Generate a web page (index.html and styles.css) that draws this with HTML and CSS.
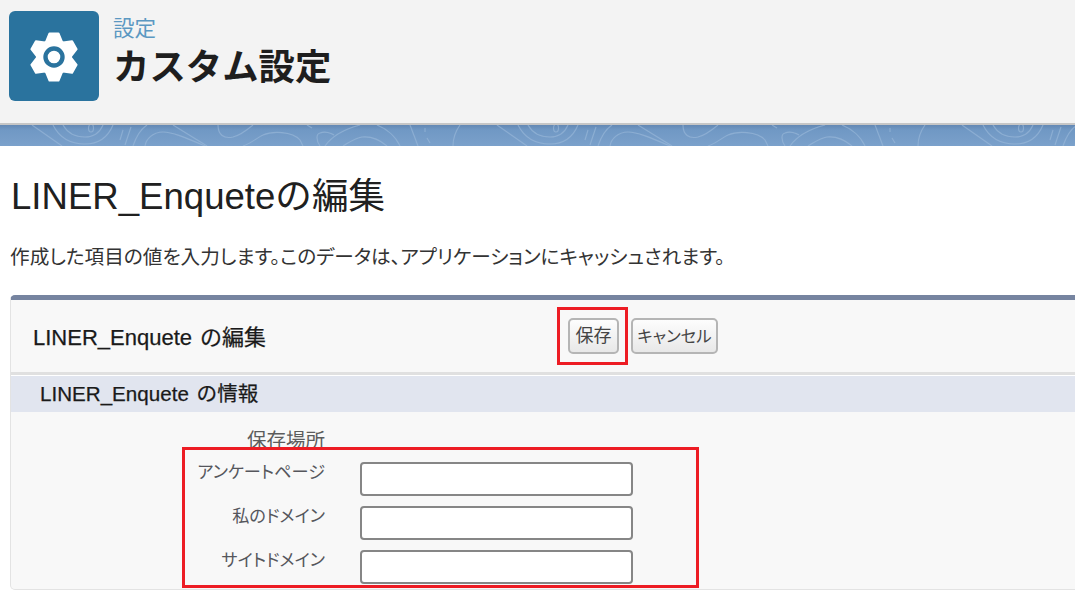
FILE: index.html
```html
<!DOCTYPE html>
<html lang="ja">
<head>
<meta charset="utf-8">
<title>カスタム設定</title>
<link rel="stylesheet" href="styles.css">
</head>
<body>
<header class="page-head">
  <div class="app-icon">
    <svg class="gear" viewBox="-30 -30 60 60" width="60" height="60" aria-hidden="true">
      <defs>
        <path id="tooth" d="M-8 -15L-4.5 -23.5H4.5L8 -15Z"/>
      </defs>
      <g fill="#fff" stroke="#fff" stroke-width="2" stroke-linejoin="round">
        <circle r="17"/>
        <use href="#tooth"/>
        <use href="#tooth" transform="rotate(60)"/>
        <use href="#tooth" transform="rotate(120)"/>
        <use href="#tooth" transform="rotate(180)"/>
        <use href="#tooth" transform="rotate(240)"/>
        <use href="#tooth" transform="rotate(300)"/>
      </g>
      <circle r="8.5" fill="#fff" stroke="#2a739e" stroke-width="4.4"/>
    </svg>
  </div>
  <div class="head-text">
    <div class="crumb">設定</div>
    <h1 class="head-title">カスタム設定</h1>
  </div>
</header>
<div class="band">
  <svg class="swirl" width="1075" height="21" aria-hidden="true">
    <defs>
      <pattern id="topo" width="465" height="21" patternUnits="userSpaceOnUse">
        <g fill="none" stroke="#9dbbdb" stroke-width="1.1" opacity=".6">
          <path d="M32 0L62 21"/>
          <path d="M53 0C60 14 72 19 85 19C98 19 108 12 113 0"/>
          <path d="M63 0C68 9 76 12 85 12C94 12 100 7 103 0"/>
          <ellipse cx="91" cy="3" rx="2.5" ry="4"/>
          <path d="M123 5L120 15M131 2L125 20"/>
          <path d="M133 21C136 12 141 4 147 0"/>
          <path d="M145 21C146 14 153 7 163 7C172 7 184 12 205 21"/>
          <path d="M173 0L207 21"/>
          <path d="M218 0C218 10 224 14 233 12C241 10 247 5 253 0"/>
          <path d="M243 21C252 18 258 12 263 10C272 6 292 6 300 15L303 21"/>
          <path d="M307 0L312 3"/>
          <path d="M320 21C316 15 316 9 320 8C325 6 331 8 334 10"/>
          <path d="M325 21C332 11 345 4 360 0M377 0C387 4 396 12 400 21"/>
          <path d="M343 21C350 17 355 13 362 12C372 11 380 15 387 21"/>
          <path d="M410 0L418 21"/>
          <path d="M425 3V7M427 13L430 18"/>
          <path d="M453 21C453 14 455 7 460 0"/>
        </g>
      </pattern>
    </defs>
    <rect width="1075" height="21" fill="url(#topo)"/>
  </svg>
</div>
<main class="content">
  <h2 class="page-title">LINER_Enqueteの編集</h2>
  <p class="page-desc">作成した項目の値を入力します。このデータは、アプリケーションにキャッシュされます。</p>
  <section class="panel">
    <div class="panel-head">
      <h3 class="panel-title">LINER_Enquete の編集</h3>
      <div class="actions">
        <button class="btn btn-save" type="button">保存<span class="mark mark-save"></span></button>
        <button class="btn btn-cancel" type="button">キャンセル</button>
      </div>
    </div>
    <h4 class="section-title">LINER_Enquete の情報</h4>
    <div class="form">
      <div class="store-label">保存場所</div>
      <div class="fields">
        <span class="mark mark-fields"></span>
        <label class="field"><span class="field-label">アンケートページ</span><input class="field-input" type="text"></label>
        <label class="field"><span class="field-label">私のドメイン</span><input class="field-input" type="text"></label>
        <label class="field"><span class="field-label">サイトドメイン</span><input class="field-input" type="text"></label>
      </div>
    </div>
  </section>
</main>
</body>
</html>
```

FILE: styles.css
```css
* { box-sizing: border-box; }
html, body { margin: 0; padding: 0; }
body {
  width: 1075px;
  height: 595px;
  overflow: hidden;
  background: #fff;
  color: #1c1c1c;
  font-family: "Liberation Sans", "Noto Sans CJK JP", sans-serif;
}
.page-head {
  height: 125px;
  background: #f3f3f3;
  border-bottom: 2px solid #c6c6c6;
  padding: 11px 0 0 9px;
  display: flex;
  gap: 15px;
}
.app-icon {
  width: 90px;
  height: 90px;
  border-radius: 6px;
  background: #2a739e;
  display: flex;
  align-items: center;
  justify-content: center;
}
.gear { display: block; margin-left: -1px; margin-top: 2px; }
.head-text { display: flex; flex-direction: column; margin-left: -1px; }
.crumb {
  font-size: 21.5px;
  line-height: 24px;
  margin-top: 6px;
  color: #5b98c2;
}
.head-title {
  margin: 5px 0 0;
  font-size: 36.4px;
  line-height: 44px;
  font-weight: 700;
  color: #1e1e1e;
}
.band {
  height: 21px;
  background: linear-gradient(#6388b4, #7098c4 5px, #7ba1cb);
  overflow: hidden;
}
.swirl { display: block; }
.content { padding: 26px 0 0 10px; }
.page-title {
  margin: 0;
  font-size: 36.6px;
  line-height: 50px;
  font-weight: 400;
  padding-left: 1px;
  color: #202020;
}
.page-desc {
  margin: 22px 0 0;
  font-size: 19.65px;
  line-height: 26px;
  font-feature-settings: "palt" 1;
  color: #333;
}
.panel {
  margin: 25px -12px 0 0;
  height: 295px;
  background: #f8f8f8;
  border: 1px solid #e3e3e3;
  border-top: 5px solid #7684a0;
  border-radius: 5px;
}
.panel-head {
  height: 75px;
  display: grid;
  grid-template-columns: 546px auto;
  align-items: center;
  border-bottom: 3px solid #e0e0e0;
  box-shadow: 0 1px 0 #fff;
}
.panel-title {
  margin: 0;
  padding: 0 0 2px 22px;
  font-size: 22px;
  font-weight: 400;
  word-spacing: 2px;
  -webkit-text-stroke: .25px #1a1a1a;
  color: #1a1a1a;
}
.actions {
  display: flex;
  gap: 12px;
  margin-left: 11px;
}
.btn {
  position: relative;
  height: 36px;
  padding: 0;
  border: 2px solid #b5b5b5;
  border-radius: 5px;
  background: linear-gradient(#fdfdfd, #e8e8e8);
  font: 18px/1 "Liberation Sans", "Noto Sans CJK JP", sans-serif;
  font-feature-settings: "palt" 1;
  color: #444;
}
.btn-save { width: 51px; }
.btn-cancel { width: 87px; font-size: 16.4px; }
.mark {
  position: absolute;
  border: 3px solid #ed1c24;
  pointer-events: none;
}
.mark-save {
  left: -13px;
  top: -13px;
  width: 71px;
  height: 58px;
}
.section-title {
  margin: 1px 0 0;
  height: 36px;
  padding-left: 29px;
  background: #e1e5ef;
  font-size: 20.6px;
  line-height: 36px;
  font-weight: 400;
  word-spacing: 2px;
  -webkit-text-stroke: .25px #1a1a1a;
  color: #1a1a1a;
}
.form { padding-top: 15px; }
.store-label {
  width: 314px;
  text-align: right;
  font-size: 19.5px;
  line-height: 26px;
  color: #5c5c5c;
}
.fields {
  position: relative;
  display: flex;
  flex-direction: column;
  gap: 10px;
  padding-top: 9px;
}
.mark-fields {
  left: 171px;
  top: -6px;
  width: 517px;
  height: 141px;
}
.field { display: flex; align-items: flex-start; height: 34px; }
.field-label {
  width: 314px;
  text-align: right;
  font-size: 17.2px;
  line-height: 20px;
  font-feature-settings: "palt" 1;
  color: #55565c;
}
.field-input {
  width: 273px;
  height: 34px;
  margin: 0 0 0 35px;
  padding: 0 4px;
  border: 2px solid #868686;
  border-radius: 4px;
  background: #fff;
}
```
